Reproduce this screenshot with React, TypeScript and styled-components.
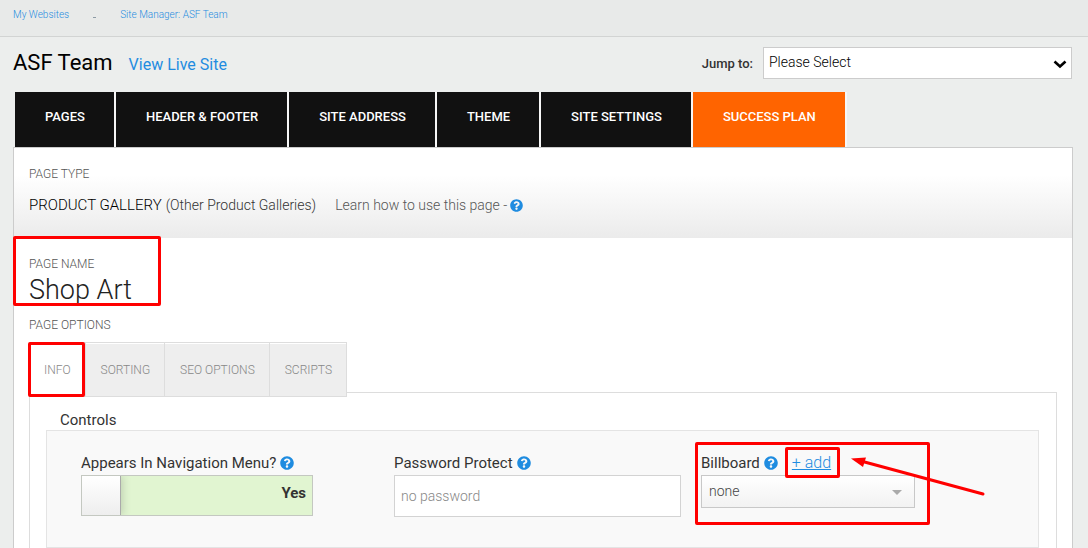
import React, { useState } from 'react';
import styled, { createGlobalStyle, css } from 'styled-components';
import { FaQuestionCircle } from 'react-icons/fa';

const GlobalStyle = createGlobalStyle`
  *, *::before, *::after { box-sizing: border-box; }
  body {
    margin: 0;
    background: #eceeed;
    color: #333;
    font-family: Roboto, "Liberation Sans", sans-serif;
    font-size: 15px;
  }
  button, input, select { font-family: inherit; }
  h1, h2, p { margin: 0; }
`;

const blue = '#1f8ce0';

const Page = styled.div`
  display: flex;
  flex-direction: column;
  min-height: 100vh;
`;

const Breadcrumbs = styled.nav`
  display: flex;
  align-items: center;
  gap: 24px;
  padding: 5px 13px 11px;
  background: #e8eae9;
  border-bottom: 1px solid #d2d4d3;
  font-size: 10px;
  line-height: 20px;
`;

const Crumb = styled.a`
  color: ${blue};
  text-decoration: none;
  font-weight: 300;
`;

const CrumbDot = styled.span`
  width: 3px;
  height: 1px;
  margin-top: 4px;
  background: #8d9ba5;
`;

const Header = styled.header`
  display: flex;
  align-items: center;
  height: 55px;
  padding: 0 16px 4px 13px;
`;

const SiteTitle = styled.h1`
  color: #000;
  font-size: 22px;
  font-weight: 400;
`;

const LiveLink = styled.a`
  margin-left: 16px;
  padding-top: 3px;
  color: ${blue};
  font-size: 16px;
  font-weight: 400;
  text-decoration: none;
`;

const JumpLabel = styled.label`
  margin: 2px 10px 0 auto;
  font-size: 13px;
  font-weight: 500;
`;

const SelectWrap = styled.div<{ $width: number }>`
  position: relative;
  width: ${(p) => p.$width}px;
`;

const JumpSelect = styled.select`
  display: block;
  appearance: none;
  width: 100%;
  height: 32px;
  padding: 0 30px 2px 5px;
  border: 1px solid #ccc;
  border-radius: 0;
  background: #fff;
  color: #000;
  font-size: 14px;
  font-weight: 300;
`;

const Caret = styled.svg<{ $right: number; $top: number }>`
  position: absolute;
  right: ${(p) => p.$right}px;
  top: ${(p) => p.$top}px;
  pointer-events: none;
`;

const SiteTabs = styled.nav`
  display: flex;
  padding-left: 15px;
`;

const SiteTab = styled.a<{ $accent?: boolean }>`
  padding: 15px 29px 20px 30px;
  border-right: 2px solid #f7f7f7;
  background: ${(p) => (p.$accent ? '#ff6400' : '#111')};
  background-clip: padding-box;
  color: #fff;
  font-size: 13px;
  font-weight: 500;
  line-height: 20px;
  text-decoration: none;
`;

const Panel = styled.main`
  flex: 1;
  margin: 0 15px 0 13px;
  border: 1px solid #ccc;
  border-bottom: 0;
  background: #fff;
`;

const PageType = styled.section`
  padding: 16px 15px 21px;
  background: linear-gradient(#fff 30%, #ebebeb);
`;

const Caption = styled.h2`
  color: #555;
  font-size: 12px;
  font-weight: 300;
  line-height: 20px;
`;

const TypeLine = styled.div`
  display: flex;
  align-items: center;
  margin-top: 9px;
  font-size: 14px;
  font-weight: 300;
  line-height: 24px;
`;

const TypeName = styled.span`
  margin-right: 4px;
  color: #000;
  font-size: 15px;
`;

const LearnLink = styled.a`
  display: inline-flex;
  align-items: center;
  gap: 3px;
  margin-left: 19px;
  color: #555;
  text-decoration: none;
`;

const HelpIcon = styled(FaQuestionCircle)`
  flex: none;
  color: ${blue};
`;

const PageName = styled.section`
  position: relative;
  padding: 16px 15px 9px;
`;

const PageNameText = styled.p`
  color: #222;
  font-size: 27px;
  font-weight: 300;
  line-height: 32px;
`;

const Options = styled.section`
  padding: 0 15px;
`;

const marker = css`
  position: absolute;
  border: 3px solid #f00;
  border-radius: 2px;
  pointer-events: none;
`;

const NameMarker = styled.span`
  ${marker}
  top: -2px;
  left: -1px;
  width: 148px;
  height: 70px;
`;

const TabMarker = styled.span`
  ${marker}
  inset: -1px 0 -1px -1px;
`;

const BillboardMarker = styled.span`
  ${marker}
  top: -9px;
  left: -6px;
  width: 235px;
  height: 83px;
`;

const AddMarker = styled.span`
  ${marker}
  inset: -4px -9px -3px -7px;
`;

const Arrow = styled.svg`
  position: absolute;
  top: 3px;
  left: 148px;
  pointer-events: none;
`;

const OptionTabs = styled.div`
  position: relative;
  z-index: 1;
  display: flex;
  margin: 7px 0 -5px;
`;

const OptionTab = styled.button<{ $active: boolean }>`
  position: relative;
  height: 55px;
  padding: 0 14px 0 15px;
  border: solid #ddd;
  border-width: 1px 1px 1px 0;
  background: ${(p) => (p.$active ? '#fff' : '#eee')};
  box-shadow: inset 0 1px #fff;
  color: #888;
  font-size: 12px;
  font-weight: 300;
`;

const OptionBody = styled.div`
  padding: 17px 17px 0 16px;
  border: 1px solid #ddd;
  border-bottom: 0;
`;

const ControlsTitle = styled.h2`
  padding-left: 14px;
  color: #333;
  font-size: 15px;
  font-weight: 400;
  line-height: 20px;
`;

const Controls = styled.div`
  display: grid;
  grid-template-columns: 313fr 307fr 337fr;
  padding: 20px 0 30px 34px;
  border: 1px solid #e4e4e4;
  background: #f9f9f9;
`;

const Field = styled.div`
  position: relative;
`;

const FieldHead = styled.div`
  display: flex;
  align-items: center;
  gap: 4px;
  height: 24px;
  color: #333;
  font-size: 15px;
`;

const Toggle = styled.label`
  display: flex;
  overflow: hidden;
  width: 232px;
  height: 41px;
  border: 1px solid #c4c8c1;
  background: #e1f5d1;
  cursor: pointer;

  input {
    position: absolute;
    opacity: 0;
  }
`;

const Knob = styled.span<{ $on: boolean }>`
  order: ${(p) => (p.$on ? 0 : 1)};
  width: 39px;
  border-right: 1px solid #aaa;
  background: linear-gradient(#fff, #eee);
  box-shadow: 2px 0 8px rgba(0, 0, 0, 0.15);
`;

const ToggleText = styled.span`
  flex: 1;
  padding: 0 6px 5px 8px;
  font-size: 15px;
  font-weight: 700;
  line-height: 34px;
  text-align: right;
`;

const PasswordInput = styled.input`
  display: block;
  width: 287px;
  height: 42px;
  padding: 0 6px;
  border: 1px solid #d3d3d3;
  background: #fff;
  color: #333;
  font-size: 14px;
  font-weight: 300;

  &::placeholder { color: #888; opacity: 1; }
`;

const BillboardSelect = styled.select`
  display: block;
  appearance: none;
  width: 100%;
  height: 33px;
  padding: 0 30px 2px 7px;
  border: 1px solid #c8c8c8;
  border-radius: 0;
  background: linear-gradient(#fff, #f2f2f2);
  color: #444;
  font-size: 14px;
  font-weight: 300;
`;

const AddLink = styled.a`
  position: relative;
  z-index: 1;
  margin-left: 10px;
  color: ${blue};
  font-size: 16px;
  font-weight: 300;
  line-height: 24px;
`;

const siteTabs = ['PAGES', 'HEADER & FOOTER', 'SITE ADDRESS', 'THEME', 'SITE SETTINGS', 'SUCCESS PLAN'];
const optionTabs = ['INFO', 'SORTING', 'SEO OPTIONS', 'SCRIPTS'];

export default function App() {
  const [tab, setTab] = useState('INFO');
  const [inMenu, setInMenu] = useState(true);

  return (
    <Page>
      <GlobalStyle />
      <Breadcrumbs aria-label="Breadcrumb">
        <Crumb href="#">My Websites</Crumb>
        <CrumbDot />
        <Crumb href="#">Site Manager: ASF Team</Crumb>
      </Breadcrumbs>

      <Header>
        <SiteTitle>ASF Team</SiteTitle>
        <LiveLink href="#">View Live Site</LiveLink>
        <JumpLabel htmlFor="jump">Jump to:</JumpLabel>
        <SelectWrap $width={309}>
          <JumpSelect id="jump">
            <option>Please Select</option>
          </JumpSelect>
          <Caret $right={5} $top={13} width="14" height="9" viewBox="0 0 14 9">
            <path d="M1.5 1.5 7 6.5 12.5 1.5" fill="none" stroke="#000" strokeWidth="2.6" />
          </Caret>
        </SelectWrap>
      </Header>

      <SiteTabs aria-label="Site">
        {siteTabs.map((name) => (
          <SiteTab key={name} href="#" $accent={name === 'SUCCESS PLAN'}>{name}</SiteTab>
        ))}
      </SiteTabs>

      <Panel>
        <PageType>
          <Caption>PAGE TYPE</Caption>
          <TypeLine>
            <TypeName>PRODUCT GALLERY</TypeName>
            <span>(Other Product Galleries)</span>
            <LearnLink href="#">
              Learn how to use this page - <HelpIcon size={13} />
            </LearnLink>
          </TypeLine>
        </PageType>

        <PageName>
          <Caption>PAGE NAME</Caption>
          <PageNameText>Shop Art</PageNameText>
          <NameMarker />
        </PageName>

        <Options>
          <Caption>PAGE OPTIONS</Caption>
          <OptionTabs role="tablist">
            {optionTabs.map((name) => (
              <OptionTab
                key={name}
                type="button"
                role="tab"
                aria-selected={tab === name}
                $active={tab === name}
                onClick={() => setTab(name)}
              >
                {name}
                {name === 'INFO' && <TabMarker />}
              </OptionTab>
            ))}
          </OptionTabs>
          <OptionBody>
            <ControlsTitle>Controls</ControlsTitle>
            <Controls>
              <Field>
                <FieldHead>
                  <label htmlFor="in-menu">Appears In Navigation Menu?</label>
                  <HelpIcon size={14} />
                </FieldHead>
                <Toggle>
                  <input
                    id="in-menu"
                    type="checkbox"
                    checked={inMenu}
                    onChange={(e) => setInMenu(e.target.checked)}
                  />
                  <Knob $on={inMenu} />
                  <ToggleText>{inMenu ? 'Yes' : 'No'}</ToggleText>
                </Toggle>
              </Field>

              <Field>
                <FieldHead>
                  <label htmlFor="password">Password Protect</label>
                  <HelpIcon size={14} />
                </FieldHead>
                <PasswordInput id="password" type="text" placeholder="no password" />
              </Field>

              <Field>
                <FieldHead>
                  <label htmlFor="billboard">Billboard</label>
                  <HelpIcon size={14} />
                  <AddLink href="#">
                    + add
                    <AddMarker />
                  </AddLink>
                </FieldHead>
                <SelectWrap $width={214}>
                  <BillboardSelect id="billboard">
                    <option>none</option>
                  </BillboardSelect>
                  <Caret $right={13} $top={15} width="10" height="5" viewBox="0 0 10 5">
                    <path d="M0 0H10L5 5Z" fill="#aaa" />
                  </Caret>
                </SelectWrap>
                <BillboardMarker />
                <Arrow width="138" height="44" viewBox="0 0 138 44">
                  <path d="M10 6.500 134 40" stroke="#f00" strokeWidth="3" fill="none" strokeLinecap="round" />
                  <path d="M2 4.500 17 3.500 14 13Z" fill="#f00" />
                </Arrow>
              </Field>
            </Controls>
          </OptionBody>
        </Options>
      </Panel>
    </Page>
  );
}
